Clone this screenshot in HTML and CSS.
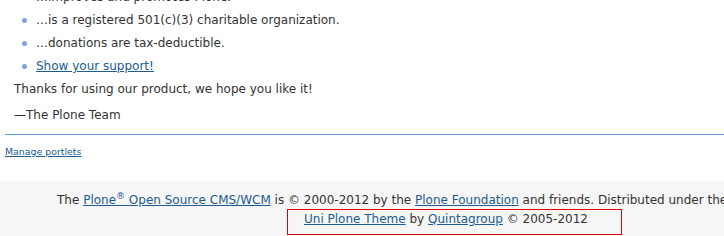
FILE: index.html
```html
<!DOCTYPE html>
<html>
<head>
<meta charset="utf-8">
<link rel="stylesheet" href="styles.css">
</head>
<body>
<div class="page">
  <div class="content">
    <ul class="facts">
      <li>…improves and promotes Plone.</li>
      <li>…is a registered 501(c)(3) charitable organization.</li>
      <li>…donations are tax-deductible.</li>
      <li><a href="#">Show your support!</a></li>
    </ul>
    <p>Thanks for using our product, we hope you like it!</p>
    <p>—The Plone Team</p>
  </div>
  <div class="rule"></div>
  <a class="manage" href="#">Manage portlets</a>
</div>
<div class="footer">
  <div class="colophon">The <a href="#">Plone<sup>®</sup> Open Source CMS/WCM</a> is © 2000-2012 by the <a href="#">Plone Foundation</a> and friends. Distributed under the <a href="#">GNU GPL license</a>.</div>
  <div class="credit"><a href="#">Uni Plone Theme</a> by <a href="#">Quintagroup</a> © 2005-2012</div>
</div>
</body>
</html>
```
FILE: styles.css
```css
html, body {
  margin: 0;
  padding: 0;
  background: #ffffff;
}
body {
  font-family: "DejaVu Sans", sans-serif;
  font-size: 12px;
  color: #333333;
  overflow: hidden;
}
a {
  color: #205c90;
  text-decoration: underline;
}
.page {
  padding-left: 5px;
  margin-top: -12px;
}
.content {
  padding-left: 9px;
}
.facts {
  list-style: none;
  margin: 0 0 3px;
  padding: 0 0 0 8px;
}
.facts li {
  display: flex;
  align-items: center;
  gap: 9px;
  line-height: 18px;
  margin-bottom: 5px;
}
.facts li::before {
  content: "";
  width: 5px;
  height: 5px;
  border-radius: 50%;
  background: #7aa6d4;
  flex: none;
}
.content p {
  margin: 0 0 8px;
  line-height: 18px;
}
.rule {
  border-top: 1px solid #5f9bd3;
  margin: 10px 0 10px;
}
.manage {
  display: block;
  font-size: 9.4px;
  line-height: 14px;
  margin-bottom: 22px;
}
.footer {
  background: #f6f6f6;
  padding: 10px 0 0 57px;
  white-space: nowrap;
  height: 60px;
}
.colophon {
  line-height: 18px;
}
.colophon sup {
  font-size: 9px;
  line-height: 0;
}
.credit {
  box-sizing: border-box;
  margin-left: 230px;
  width: 335px;
  border: 1px solid #e00000;
  padding: 0 0 6px 16px;
  line-height: 18px;
}
```
